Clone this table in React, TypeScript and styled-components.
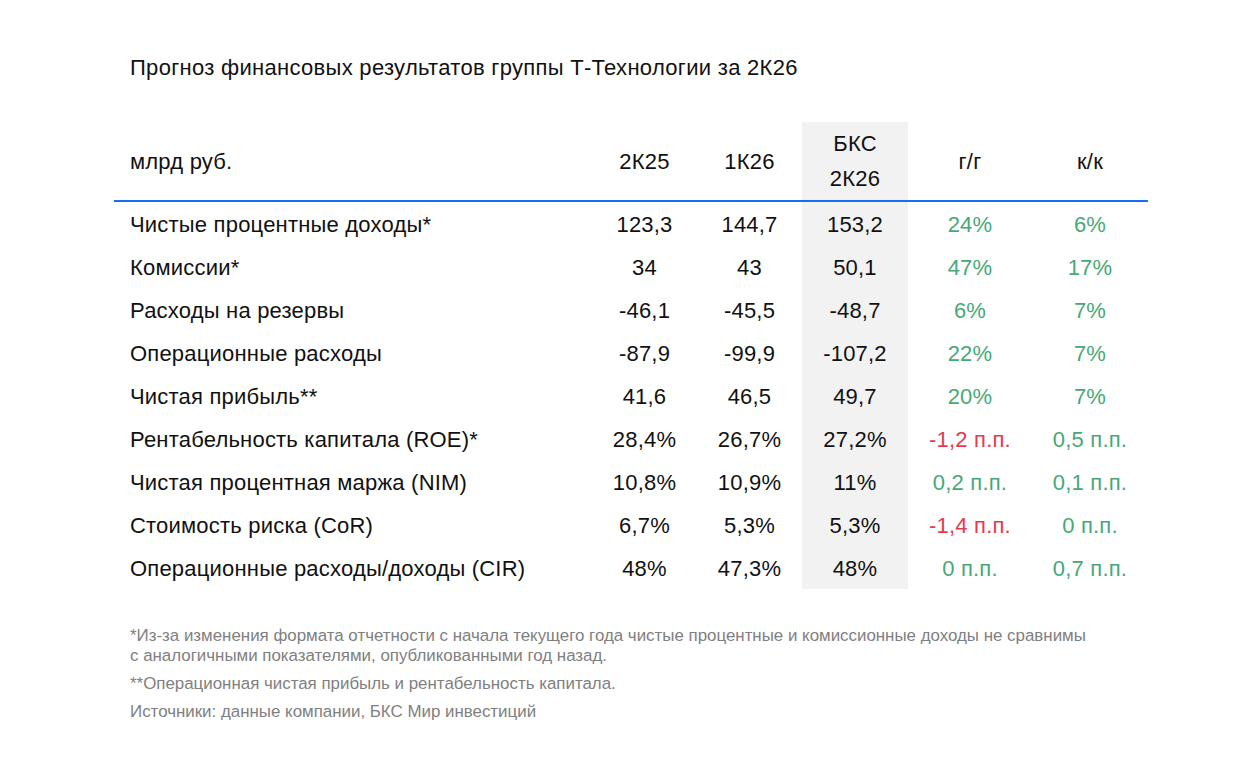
import styled, { createGlobalStyle } from "styled-components"

const GlobalStyle = createGlobalStyle`
  * {
    box-sizing: border-box;
  }

  body {
    margin: 0;
    background: #fff;
    font-family: "Liberation Sans", Arial, sans-serif;
    color: #111;
  }
`

type Tone = "plain" | "up" | "down"

type Row = {
  label: string
  q225: string
  q126: string
  bcs: string
  yoy: string
  yoyTone: Tone
  qoq: string
  qoqTone: Tone
}

const rows: Row[] = [
  { label: "Чистые процентные доходы*", q225: "123,3", q126: "144,7", bcs: "153,2", yoy: "24%", yoyTone: "up", qoq: "6%", qoqTone: "up" },
  { label: "Комиссии*", q225: "34", q126: "43", bcs: "50,1", yoy: "47%", yoyTone: "up", qoq: "17%", qoqTone: "up" },
  { label: "Расходы на резервы", q225: "-46,1", q126: "-45,5", bcs: "-48,7", yoy: "6%", yoyTone: "up", qoq: "7%", qoqTone: "up" },
  { label: "Операционные расходы", q225: "-87,9", q126: "-99,9", bcs: "-107,2", yoy: "22%", yoyTone: "up", qoq: "7%", qoqTone: "up" },
  { label: "Чистая прибыль**", q225: "41,6", q126: "46,5", bcs: "49,7", yoy: "20%", yoyTone: "up", qoq: "7%", qoqTone: "up" },
  { label: "Рентабельность капитала (ROE)*", q225: "28,4%", q126: "26,7%", bcs: "27,2%", yoy: "-1,2 п.п.", yoyTone: "down", qoq: "0,5 п.п.", qoqTone: "up" },
  { label: "Чистая процентная маржа (NIM)", q225: "10,8%", q126: "10,9%", bcs: "11%", yoy: "0,2 п.п.", yoyTone: "up", qoq: "0,1 п.п.", qoqTone: "up" },
  { label: "Стоимость риска (CoR)", q225: "6,7%", q126: "5,3%", bcs: "5,3%", yoy: "-1,4 п.п.", yoyTone: "down", qoq: "0 п.п.", qoqTone: "up" },
  { label: "Операционные расходы/доходы (CIR)", q225: "48%", q126: "47,3%", bcs: "48%", yoy: "0 п.п.", yoyTone: "up", qoq: "0,7 п.п.", qoqTone: "up" },
]

const toneColor = {
  plain: "#111",
  up: "#47a877",
  down: "#e8384f",
}

const App = () => {
  return (
    <>
      <GlobalStyle />
      <Page>
        <Title>Прогноз финансовых результатов группы Т-Технологии за 2К26</Title>

        <Table>
          <colgroup>
            <col style={{ width: 478 }} />
            <col style={{ width: 105 }} />
            <col style={{ width: 105 }} />
            <col style={{ width: 106 }} />
            <col style={{ width: 124 }} />
            <col style={{ width: 116 }} />
          </colgroup>
          <thead>
            <tr>
              <HeadCell $align="left">млрд руб.</HeadCell>
              <HeadCell>2К25</HeadCell>
              <HeadCell>1К26</HeadCell>
              <HeadCell $highlight>
                БКС
                <br />
                2К26
              </HeadCell>
              <HeadCell>г/г</HeadCell>
              <HeadCell>к/к</HeadCell>
            </tr>
          </thead>
          <tbody>
            {rows.map((row) => (
              <tr key={row.label}>
                <Cell $align="left">{row.label}</Cell>
                <Cell>{row.q225}</Cell>
                <Cell>{row.q126}</Cell>
                <Cell $highlight>{row.bcs}</Cell>
                <Cell $tone={row.yoyTone}>{row.yoy}</Cell>
                <Cell $tone={row.qoqTone}>{row.qoq}</Cell>
              </tr>
            ))}
          </tbody>
        </Table>

        <Notes>
          <Note>
            *Из-за изменения формата отчетности с начала текущего года чистые процентные и комиссионные доходы не сравнимы
            <br />
            с аналогичными показателями, опубликованными год назад.
          </Note>
          <Note>**Операционная чистая прибыль и рентабельность капитала.</Note>
          <Note>Источники: данные компании, БКС Мир инвестиций</Note>
        </Notes>
      </Page>
    </>
  )
}

const Page = styled.div`
  width: 1253px;
  min-height: 765px;
  padding: 56px 0 0 114px;
`

const Title = styled.h1`
  margin: 0 0 42px;
  padding-left: 16px;
  font-size: 22px;
  line-height: 24px;
  letter-spacing: 0.3px;
  font-weight: 400;
  color: #111;
  white-space: nowrap;
`

const Table = styled.table`
  width: 1034px;
  table-layout: fixed;
  border-collapse: separate;
  border-spacing: 0;
  font-size: 22px;
  letter-spacing: 0.2px;
`

const HeadCell = styled.th<{ $align?: "left" | "center"; $highlight?: boolean }>`
  padding: 4px 0 4px ${(p) => (p.$align === "left" ? "16px" : "0")};
  height: 80px;
  line-height: 35px;
  font-weight: 400;
  text-align: ${(p) => p.$align || "center"};
  vertical-align: middle;
  white-space: nowrap;
  border-bottom: 2px solid #1570ef;
  background: ${(p) => (p.$highlight ? "#f2f2f2" : "transparent")};
`

const Cell = styled.td<{ $align?: "left" | "center"; $highlight?: boolean; $tone?: Tone }>`
  padding: 2px 0 0 ${(p) => (p.$align === "left" ? "16px" : "0")};
  height: 43px;
  line-height: 41px;
  text-align: ${(p) => p.$align || "center"};
  vertical-align: top;
  white-space: nowrap;
  color: ${(p) => toneColor[p.$tone || "plain"]};
  background: ${(p) => (p.$highlight ? "#f2f2f2" : "transparent")};
`

const Notes = styled.div`
  display: flex;
  flex-direction: column;
  gap: 8px;
  margin-top: 37px;
  padding-left: 16px;
`

const Note = styled.p`
  margin: 0;
  font-size: 16.9px;
  line-height: 20px;
  color: #808080;
  white-space: nowrap;
`

export default App
